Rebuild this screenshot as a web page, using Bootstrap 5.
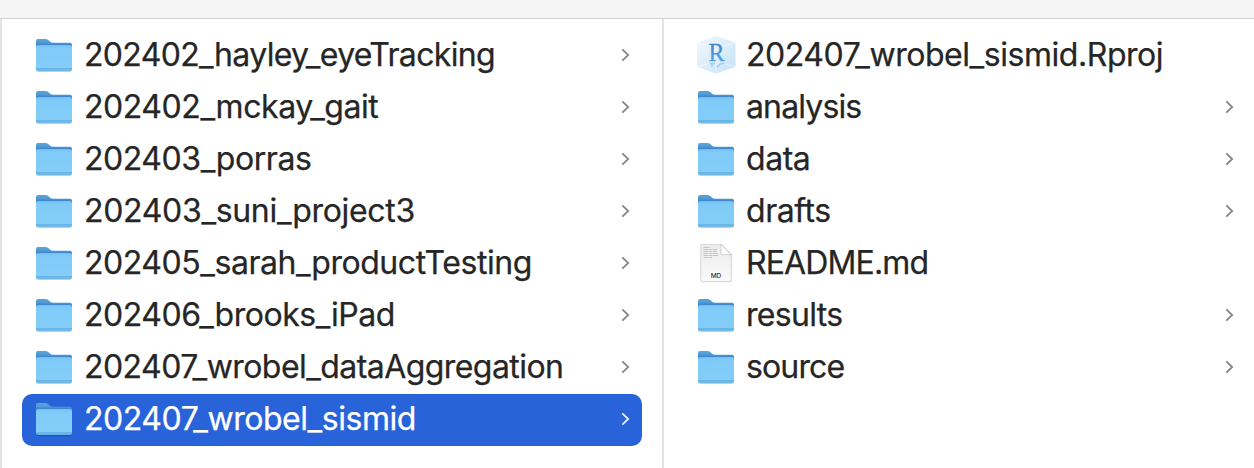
<!DOCTYPE html>
<html lang="en">
<head>
<meta charset="utf-8">
<meta name="viewport" content="width=device-width, initial-scale=1">
<title>Files</title>
<link href="https://cdn.jsdelivr.net/npm/bootstrap@5.3.0/dist/css/bootstrap.min.css" rel="stylesheet">
<style>
body{font-family:Inter,"Liberation Sans",sans-serif;color:#262626;background:#fff}
.toolbar-strip{height:19px;background:#f5f5f5;border-bottom:1px solid #d0d0d0}
.pane{border-left:2px solid #e3e3e3;padding-top:11px}
.pane-left{width:662px;padding-left:20px;padding-right:20px}
.pane-right{padding-left:20px;padding-right:8px}
.file-row{height:52px;padding:0 10px 0 11px;border-radius:10px}
.file-row.selected{background:#2863da;color:#fff}
.file-icon{width:42px;height:42px;margin-top:2px}
.file-name{font-size:32px;line-height:50px;padding-bottom:2px;margin-left:9px;letter-spacing:-.45px;-webkit-text-stroke:.25px currentColor}
.tight-1 .file-name{letter-spacing:-.56px}
.tight-2 .file-name{letter-spacing:-.67px}
.tight-3 .file-name{letter-spacing:-.87px}
.loose .file-name{letter-spacing:-.32px}
.chevron{width:14px;height:18px;fill:none;stroke:#868686;stroke-width:1.8;margin-bottom:2px}
.selected .chevron{stroke:#e8eefb}
</style>
</head>
<body class="vh-100 overflow-hidden d-flex flex-column">
<svg width="0" height="0" class="position-absolute" aria-hidden="true">
<defs>
<linearGradient id="tab" x2="0" y2="1"><stop stop-color="#5ba3d6"/><stop offset=".13" stop-color="#4f9ad2"/><stop offset=".2" stop-color="#3f86cd"/><stop offset="1" stop-color="#3f86cd"/></linearGradient>
<linearGradient id="front" x2="0" y2="1"><stop stop-color="#72c0f0"/><stop offset=".12" stop-color="#7fcaf7"/><stop offset="1" stop-color="#84cdf8"/></linearGradient>
<linearGradient id="cube" x2="1" y2="1"><stop stop-color="#f0f8fd"/><stop offset=".5" stop-color="#dceefa"/><stop offset="1" stop-color="#c5e2f7"/></linearGradient>
<linearGradient id="rfill" x2="0" y2="1"><stop stop-color="#3d78c6"/><stop offset="1" stop-color="#55aeee"/></linearGradient>
<linearGradient id="paper" x2="0" y2="1"><stop stop-color="#ececec"/><stop offset="1" stop-color="#fafafa"/></linearGradient>
<symbol id="folder" viewBox="0 0 42 42">
<g transform="translate(0 1)">
<path d="M3 31H39V32.500Q39 34.700 36.800 34.700H5.200Q3 34.700 3 32.500Z" fill="#000" opacity=".28"/>
<path d="M3 30V4Q3 2 5 2H12.500Q14 2 15.200 3L17.500 4.900Q18.500 5.700 20 5.700H37Q39 5.700 39 7.700V30Z" fill="url(#tab)"/>
<path d="M3 10Q3 8 5 8H37Q39 8 39 10V31.500Q39 33.800 36.700 33.800H5.300Q3 33.800 3 31.500Z" fill="url(#front)"/>
<path d="M3 31H39V31.500Q39 33.800 36.700 33.800H5.300Q3 33.800 3 31.500Z" fill="#69b7e8"/>
</g>
</symbol>
<symbol id="rproj" viewBox="0 0 42 42">
<path d="M21 0L40.500 6.500V31L21 37.500L2 31V6.500Z" fill="url(#cube)"/>
<path d="M2 6.500L21 12L40.500 6.500M21 12V37.500M2 31L21 25L40.500 31" fill="none" stroke="#fff" stroke-opacity=".55"/>
<text x="21.500" y="24.500" text-anchor="middle" font-family="Liberation Serif,serif" font-size="26" textLength="16" lengthAdjust="spacingAndGlyphs" stroke="url(#rfill)" stroke-width=".3" fill="url(#rfill)">R</text>
<path d="M14.500 27.500H20M17 27.500V31M22 31L26 27.500M26 27.500H29.500" stroke="#8ac2ec" stroke-width="1.400" opacity=".75"/>
</symbol>
<symbol id="doc" viewBox="0 0 42 42">
<path d="M7 0H26.500L37 10.500V36Q37 38.300 34.700 38.300H7.800Q5.500 38.300 5.500 36V2Q5.500 0 7 0Z" fill="#b9b9b9" opacity=".5"/>
<path d="M8 .4H26L36.300 10.700V35.500Q36.300 37.500 34.300 37.500H8Q6 37.500 6 35.500V2.400Q6 .4 8 .4Z" fill="url(#paper)" stroke="#cfcfcf" stroke-width=".6"/>
<path d="M8.500 3.500H15M8.500 5.500H22M8.500 7.500H22M8.500 9.500H23M8.500 11.500H24M8.500 13.500H17" stroke="#b7b7b7" stroke-width=".8" stroke-dasharray="5 .7 3 .7"/>
<path d="M26 .4L36.300 10.700H27.500Q26 10.700 26 9.200Z" fill="#fdfdfd" stroke="#bdbdbd" stroke-width=".7"/>
<text x="21" y="34" text-anchor="middle" font-family="Inter,sans-serif" font-size="6.500" font-weight="500" fill="#333">MD</text>
</symbol>
<symbol id="chev" viewBox="0 0 14 18"><path d="M4.300 3.300L10.200 9L4.300 14.700"/></symbol>
</defs>
</svg>
<header class="toolbar-strip flex-shrink-0"></header>
<main class="d-flex flex-grow-1">
<section class="pane pane-left flex-shrink-0">
<div class="file-row d-flex align-items-center tight-2"><svg class="file-icon flex-shrink-0"><use href="#folder"/></svg><span class="file-name text-nowrap">202402_hayley_eyeTracking</span><svg class="chevron ms-auto flex-shrink-0"><use href="#chev"/></svg></div>
<div class="file-row d-flex align-items-center"><svg class="file-icon flex-shrink-0"><use href="#folder"/></svg><span class="file-name text-nowrap">202402_mckay_gait</span><svg class="chevron ms-auto flex-shrink-0"><use href="#chev"/></svg></div>
<div class="file-row d-flex align-items-center"><svg class="file-icon flex-shrink-0"><use href="#folder"/></svg><span class="file-name text-nowrap">202403_porras</span><svg class="chevron ms-auto flex-shrink-0"><use href="#chev"/></svg></div>
<div class="file-row d-flex align-items-center loose"><svg class="file-icon flex-shrink-0"><use href="#folder"/></svg><span class="file-name text-nowrap">202403_suni_project3</span><svg class="chevron ms-auto flex-shrink-0"><use href="#chev"/></svg></div>
<div class="file-row d-flex align-items-center"><svg class="file-icon flex-shrink-0"><use href="#folder"/></svg><span class="file-name text-nowrap">202405_sarah_productTesting</span><svg class="chevron ms-auto flex-shrink-0"><use href="#chev"/></svg></div>
<div class="file-row d-flex align-items-center"><svg class="file-icon flex-shrink-0"><use href="#folder"/></svg><span class="file-name text-nowrap">202406_brooks_iPad</span><svg class="chevron ms-auto flex-shrink-0"><use href="#chev"/></svg></div>
<div class="file-row d-flex align-items-center tight-1"><svg class="file-icon flex-shrink-0"><use href="#folder"/></svg><span class="file-name text-nowrap">202407_wrobel_dataAggregation</span><svg class="chevron ms-auto flex-shrink-0"><use href="#chev"/></svg></div>
<div class="file-row d-flex align-items-center selected"><svg class="file-icon flex-shrink-0"><use href="#folder"/></svg><span class="file-name text-nowrap">202407_wrobel_sismid</span><svg class="chevron ms-auto flex-shrink-0"><use href="#chev"/></svg></div>
</section>
<section class="pane pane-right flex-grow-1">
<div class="file-row d-flex align-items-center"><svg class="file-icon flex-shrink-0"><use href="#rproj"/></svg><span class="file-name text-nowrap">202407_wrobel_sismid.Rproj</span></div>
<div class="file-row d-flex align-items-center tight-3"><svg class="file-icon flex-shrink-0"><use href="#folder"/></svg><span class="file-name text-nowrap">analysis</span><svg class="chevron ms-auto flex-shrink-0"><use href="#chev"/></svg></div>
<div class="file-row d-flex align-items-center"><svg class="file-icon flex-shrink-0"><use href="#folder"/></svg><span class="file-name text-nowrap">data</span><svg class="chevron ms-auto flex-shrink-0"><use href="#chev"/></svg></div>
<div class="file-row d-flex align-items-center"><svg class="file-icon flex-shrink-0"><use href="#folder"/></svg><span class="file-name text-nowrap">drafts</span><svg class="chevron ms-auto flex-shrink-0"><use href="#chev"/></svg></div>
<div class="file-row d-flex align-items-center tight-3"><svg class="file-icon flex-shrink-0"><use href="#doc"/></svg><span class="file-name text-nowrap">README.md</span></div>
<div class="file-row d-flex align-items-center tight-2"><svg class="file-icon flex-shrink-0"><use href="#folder"/></svg><span class="file-name text-nowrap">results</span><svg class="chevron ms-auto flex-shrink-0"><use href="#chev"/></svg></div>
<div class="file-row d-flex align-items-center tight-3"><svg class="file-icon flex-shrink-0"><use href="#folder"/></svg><span class="file-name text-nowrap">source</span><svg class="chevron ms-auto flex-shrink-0"><use href="#chev"/></svg></div>
</section>
</main>
<script src="https://cdn.jsdelivr.net/npm/bootstrap@5.3.0/dist/js/bootstrap.bundle.min.js"></script>
</body>
</html>
